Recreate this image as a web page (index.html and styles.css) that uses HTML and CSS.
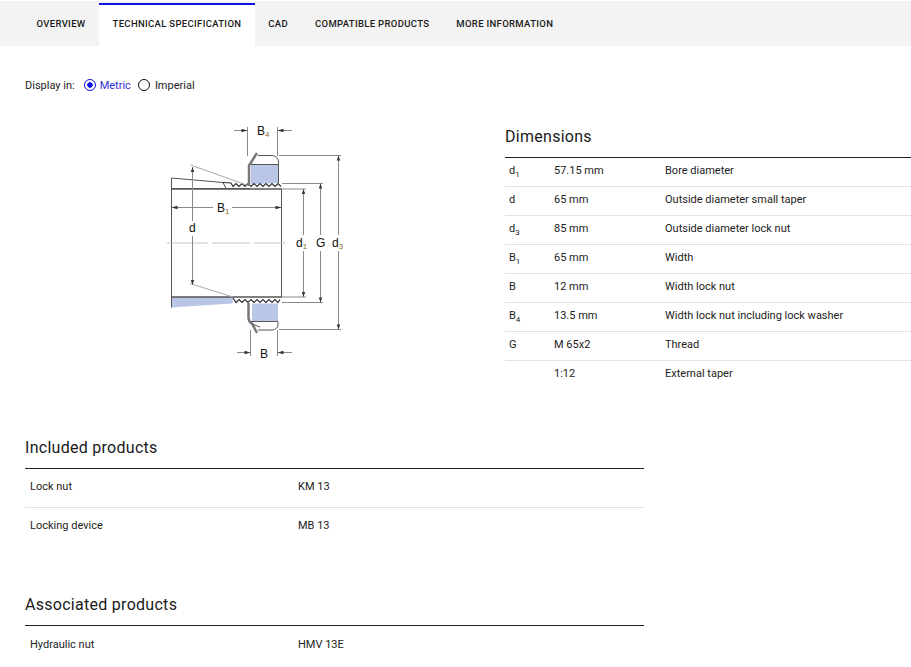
FILE: index.html
```html
<!DOCTYPE html>
<html lang="en">
<head>
    <meta charset="UTF-8">
    <title>Technical specification</title>
    <link rel="stylesheet" href="styles.css">
</head>
<body>
    <ul class="tabs">
        <li>OVERVIEW</li>
        <li class="active">TECHNICAL SPECIFICATION</li>
        <li>CAD</li>
        <li>COMPATIBLE PRODUCTS</li>
        <li>MORE INFORMATION</li>
    </ul>
    <div class="content">
        <div class="units">
            <span>Display in:</span>
            <span class="radio radioOn"></span>
            <span class="unitOn">Metric</span>
            <span class="radio"></span>
            <span>Imperial</span>
        </div>
        <div class="specRow">
            <div class="drawing">
                <svg class="sketch" viewBox="150 115 210 260" width="210" height="260">
                    <!-- blue parts -->
                    <path class="fill" d="M251 164.500H278.500V183L251 184Z"/>
                    <path class="fill" d="M252 303.500H278V321.500H252Z"/>
                    <path class="fill" d="M171.500 297H233L232.500 303.500L171.500 307.500Z"/>
                    <!-- sleeve -->
                    <path class="thick" d="M171 189H282M171 297H282"/>
                    <path class="line" d="M171.500 178V307.500M281.500 189V297M171.500 178L223 182.500L226 188.500M171.500 188.500H250"/>
                    <path class="thread" d="M223 182.500L231 183L233 186.500L236 183.500L239 186.500L242 183.500L245 186.500L248 183.500L251 186.500L254 183.500L257 186.500L260 183.500L263 186.500L266 183.500L269 186.500L272 183.500L275 186.500L278 183.500L281 186.500"/>
                    <path class="thread" d="M233 298L236 302.500L239 299.500L242 302.500L245 299.500L248 302.500L251 299.500L254 302.500L257 299.500L260 302.500L263 299.500L266 302.500L269 299.500L272 302.500L275 299.500L278 302.500L280 299.500"/>
                    <!-- lock nut and washer -->
                    <path class="line" d="M258 155.500H272Q278 156 278.500 162V183M251 164.500H278.500"/>
                    <path class="washer" d="M257 153L249 165.500V186"/>
                    <path class="line" d="M251 321.500H278V325Q277.500 329.500 272 330H258"/>
                    <path class="washer" d="M248.500 303V318Q249 322 252 323.500L257 333"/>
                    <path class="line" d="M252 324L260 327"/>
                    <!-- dimension lines -->
                    <path class="center" d="M167 243H208M212 243H250M254 243H285"/>
                    <path class="thin" d="M190.500 165L248 185.500M190 283.500L233 297"/>
                    <path class="dim" d="M282 189H306M282 297H306M282 183.500H323M282 302.500H323M279 155.500H341M279 329.500H341"/>
                    <path class="dim" d="M303.500 189V235M303.500 251V297M320.500 183.500V235M320.500 251V302.500M338.500 155.500V235M338.500 251V329.500"/>
                    <path class="dim" d="M192.500 167V221M192.500 236V285"/>
                    <path class="dim" d="M171.500 207.500H213M232 207.500H281.500"/>
                    <path class="dim" d="M247.500 127V156M277.500 127V156M250.500 330V356M277.500 330V356"/>
                    <path class="dim" d="M234 130.500H247.500M277.500 130.500H292M237 352.500H250.500M277.500 352.500H292"/>
                    <path class="arrow" d="M303.500 189L301.800 194H305.200ZM303.500 297L301.800 292H305.200ZM320.500 183.500L318.800 188.500H322.200ZM320.500 302.500L318.800 297.500H322.200ZM338.500 155.500L336.800 160.500H340.200ZM338.500 329.500L336.800 324.500H340.200ZM192.500 167L190.800 172H194.200ZM192.500 285L190.800 280H194.200Z"/>
                    <path class="arrow" d="M171.500 207.500L177.500 205.800V209.200ZM281.500 207.500L275.500 205.800V209.200ZM247.500 130.500L241.500 128.800V132.200ZM277.500 130.500L283.500 128.800V132.200ZM250.500 352.500L244.500 350.800V354.200ZM277.500 352.500L283.500 350.800V354.200Z"/>
                    <!-- labels -->
                    <text x="257" y="135">B<tspan class="sub" dy="2">4</tspan></text>
                    <text x="217" y="212">B<tspan class="sub" dy="2">1</tspan></text>
                    <text x="189" y="232">d</text>
                    <text x="296" y="247">d<tspan class="sub" dy="2">1</tspan></text>
                    <text x="316" y="247">G</text>
                    <text x="332" y="247">d<tspan class="sub" dy="2">3</tspan></text>
                    <text x="260" y="358">B</text>
                </svg>
            </div>
            <div class="dimensions">
                <h2>Dimensions</h2>
                <table class="dimTable">
                    <tr><td class="sym">d<sub>1</sub></td><td class="val">57.15 mm</td><td>Bore diameter</td></tr>
                    <tr><td class="sym">d</td><td class="val">65 mm</td><td>Outside diameter small taper</td></tr>
                    <tr><td class="sym">d<sub>3</sub></td><td class="val">85 mm</td><td>Outside diameter lock nut</td></tr>
                    <tr><td class="sym">B<sub>1</sub></td><td class="val">65 mm</td><td>Width</td></tr>
                    <tr><td class="sym">B</td><td class="val">12 mm</td><td>Width lock nut</td></tr>
                    <tr><td class="sym">B<sub>4</sub></td><td class="val">13.5 mm</td><td>Width lock nut including lock washer</td></tr>
                    <tr><td class="sym">G</td><td class="val">M 65x2</td><td>Thread</td></tr>
                    <tr><td class="sym"></td><td class="val">1:12</td><td>External taper</td></tr>
                </table>
            </div>
        </div>
        <div class="products included">
            <h2>Included products</h2>
            <table class="prodTable">
                <tr><td class="prodName">Lock nut</td><td>KM 13</td></tr>
                <tr><td class="prodName">Locking device</td><td>MB 13</td></tr>
            </table>
        </div>
        <div class="products associated">
            <h2>Associated products</h2>
            <table class="prodTable">
                <tr><td class="prodName">Hydraulic nut</td><td>HMV 13E</td></tr>
            </table>
        </div>
    </div>
</body>
</html>
```

FILE: styles.css
```css
* {
    padding: 0;
    margin: 0;
    list-style: none;
    box-sizing: border-box;
}

html, body {
    height: 667px;
    overflow: hidden;
}

body {
    background-color: #fff;
    color: #222;
    font-family: "Roboto", "Noto Sans", sans-serif;
    font-size: 11px;
}

.tabs {
    display: flex;
    height: 45px;
    margin-top: 1px;
    padding-left: 23px;
    background-color: #f3f3f3;
}

.tabs li {
    padding: 17px 13.5px 0;
    color: #1a1a1a;
    font-size: 9.5px;
    font-weight: 500;
    letter-spacing: 0.33px;
    white-space: nowrap;
}

.tabs .active {
    margin-top: 2px;
    padding-top: 13px;
    border-top: 2px solid #0f0fe6;
    background-color: #fff;
}

.content {
    padding-left: 25px;
}

.units {
    display: flex;
    align-items: center;
    height: 16px;
    margin-top: 31px;
}

.unitOn {
    color: #2f2fd8;
}

.radio {
    width: 12px;
    height: 12px;
    margin: 0 4px 0 9px;
    border: 1.5px solid #111;
    border-radius: 50%;
}

.radioOn {
    border-color: #0f0fe6;
    background: radial-gradient(circle, #0f0fe6 2.5px, #fff 3px);
}

.unitOn + .radio {
    margin-left: 7px;
    margin-right: 5px;
}

.specRow {
    display: flex;
    margin-top: 16px;
}

.drawing {
    flex: 0 0 480px;
    padding: 6px 0 0 125px;
}

.sketch {
    display: block;
}

.fill {
    fill: #b9c6e8;
    stroke: none;
}

.line, .thick, .thin, .dim, .washer, .center, .thread {
    fill: none;
}

.line {
    stroke: #555;
    stroke-width: 1;
}

.thread {
    stroke: #333;
    stroke-width: 1.2;
}

.thick {
    stroke: #555;
    stroke-width: 1.5;
}

.thin {
    stroke: #aaa;
    stroke-width: 1;
}

.center {
    stroke: #c4c4c4;
    stroke-width: 1;
}

.dim {
    stroke: #8a8a8a;
    stroke-width: 1;
}

.washer {
    stroke: #777;
    stroke-width: 2.5;
}

.arrow {
    fill: #333;
}

.sketch text {
    fill: #111;
    font-family: "Liberation Sans", sans-serif;
    font-size: 12px;
}

.sketch .sub {
    fill: #8a6a2a;
    font-size: 8px;
}

h2 {
    color: #1a1a1a;
    font-size: 16px;
    font-weight: 400;
    line-height: 20px;
    letter-spacing: 0.28px;
}

.dimensions {
    flex: 1;
    padding-top: 18px;
}

.dimTable {
    width: 100%;
    margin-top: 10px;
    border-top: 1px solid #222;
    border-collapse: collapse;
}

.dimTable td {
    height: 29px;
    padding: 0 0 4px 4px;
    border-bottom: 1px solid #e2e2e2;
    vertical-align: middle;
}

.dimTable tr:last-child td {
    border-bottom: 0;
}

.dimTable .sym {
    width: 45px;
}

.dimTable .val {
    width: 111px;
}

.dimTable sub {
    font-size: 8px;
    line-height: 0;
}

.products {
    width: 619px;
}

.included {
    margin-top: 48px;
}

.associated {
    margin-top: 49px;
}

.prodTable {
    width: 100%;
    margin-top: 10px;
    border-top: 1px solid #222;
    border-collapse: collapse;
}

.prodTable td {
    height: 39px;
    padding: 0 0 2px 5px;
    border-bottom: 1px solid #e2e2e2;
}

.prodTable tr:last-child td {
    border-bottom: 0;
}

.prodTable .prodName {
    width: 268px;
}
```
